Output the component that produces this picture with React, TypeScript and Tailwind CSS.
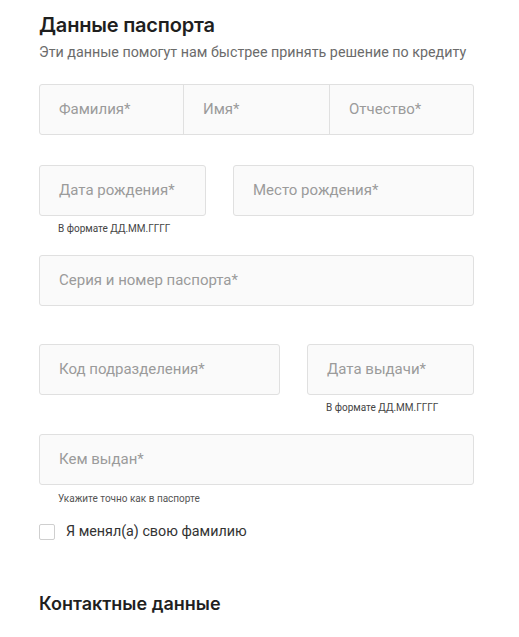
const FONT = "font-['Roboto','Liberation_Sans',sans-serif]";

function Field({ label, className = "" }: { label: string; className?: string }) {
  return (
    <div
      className={`flex h-[51px] items-center rounded-[3px] border border-[#e0e0e0] bg-[#fafafa] px-[19px] text-[15px] text-[#9b9b9b] ${className}`}
    >
      {label}
    </div>
  );
}

function Hint({ children, className = "" }: { children: string; className?: string }) {
  return <div className={`mt-[5px] h-[16px] pl-[19px] text-[10px] leading-[16px] text-[#444] ${className}`}>{children}</div>;
}

export default function App() {
  return (
    <div className={`min-h-[637px] w-[519px] bg-white pl-[39px] pr-[45px] pt-[12px] ${FONT}`}>
      <h2 className="font-['Inter','Noto_Sans',sans-serif] text-[20px] font-semibold leading-[26px] tracking-[-0.2px] text-[#1f1f1f]">
        Данные паспорта
      </h2>
      <p className="mt-[4px] text-[14.3px] leading-[20px] text-[#6b6b6b]">
        Эти данные помогут нам быстрее принять решение по кредиту
      </p>

      <div className="mt-[22px] flex h-[51px] rounded-[3px] border border-[#e0e0e0] bg-[#fafafa] text-[15px] text-[#9b9b9b]">
        <div className="flex w-[144px] items-center border-r border-[#e0e0e0] px-[19px]">Фамилия*</div>
        <div className="flex w-[146px] items-center border-r border-[#e0e0e0] px-[19px]">Имя*</div>
        <div className="flex flex-1 items-center px-[19px]">Отчество*</div>
      </div>

      <div className="mt-[30px] flex gap-[27px]">
        <div className="w-[167px]">
          <Field label="Дата рождения*" className="h-[50px]" />
          <Hint>В формате ДД.ММ.ГГГГ</Hint>
        </div>
        <div className="flex-1">
          <Field label="Место рождения*" className="h-[50px]" />
        </div>
      </div>

      <Field label="Серия и номер паспорта*" className="mt-[18px]" />

      <div className="mt-[38px] flex gap-[27px]">
        <div className="w-[241px]">
          <Field label="Код подразделения*" className="h-[50px]" />
        </div>
        <div className="flex-1">
          <Field label="Дата выдачи*" className="h-[50px]" />
          <Hint>В формате ДД.ММ.ГГГГ</Hint>
        </div>
      </div>

      <Field label="Кем выдан*" className="mt-[18px]" />
      <Hint className="mt-[6px] text-[#555]">Укажите точно как в паспорте</Hint>

      <label className="mt-[14px] flex items-center gap-[11px]">
        <span className="h-[16px] w-[16px] rounded-[2px] border border-[#cfcfcf] bg-white" />
        <span className="text-[14.3px] text-[#333]">Я менял(а) свою фамилию</span>
      </label>

      <h2 className="mt-[50px] font-['Inter','Noto_Sans',sans-serif] text-[18px] font-semibold leading-[24px] text-[#1f1f1f]">
        Контактные данные
      </h2>
    </div>
  );
}
